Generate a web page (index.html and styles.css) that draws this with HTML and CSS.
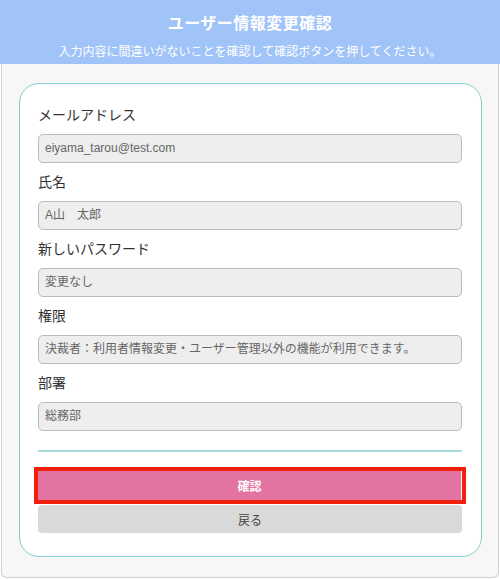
FILE: index.html
```html
<!DOCTYPE html>
<html lang="ja">
<head>
<meta charset="utf-8">
<title>ユーザー情報変更確認</title>
<link rel="stylesheet" href="styles.css">
</head>
<body>
<header class="header">
  <h1 class="title">ユーザー情報変更確認</h1>
  <p class="subtitle">入力内容に間違いがないことを確認して確認ボタンを押してください。</p>
</header>
<main class="main">
  <section class="card">
    <div class="field">
      <label class="label">メールアドレス</label>
      <div class="input latin">eiyama_tarou@test.com</div>
    </div>
    <div class="field">
      <label class="label">氏名</label>
      <div class="input">A山　太郎</div>
    </div>
    <div class="field">
      <label class="label">新しいパスワード</label>
      <div class="input">変更なし</div>
    </div>
    <div class="field">
      <label class="label">権限</label>
      <div class="input">決裁者：利用者情報変更・ユーザー管理以外の機能が利用できます。</div>
    </div>
    <div class="field">
      <label class="label">部署</label>
      <div class="input">総務部</div>
    </div>
    <hr class="divider">
    <div class="actions">
      <button class="btn btn-confirm">確認</button>
      <button class="btn btn-back">戻る</button>
    </div>
  </section>
</main>
</body>
</html>
```
FILE: styles.css
```css
* { box-sizing: border-box; }
html, body {
  margin: 0;
  padding: 0;
  background: #ffffff;
}
body {
  font-family: "Liberation Sans", "Noto Sans CJK JP", sans-serif;
  color: #333;
  width: 500px;
  height: 579px;
}
.header {
  background: #a0c3f8;
  height: 64px;
  text-align: center;
  color: #fff;
  padding-top: 13px;
}
.title {
  margin: 0;
  font-size: 16px;
  line-height: 22px;
  font-weight: bold;
  letter-spacing: 0.5px;
}
.subtitle {
  margin: 9px 0 0;
  font-size: 12px;
  line-height: 16px;
}
.main {
  margin: 0 1px;
  height: 514px;
  background: #f7f7f7;
  border: 1px solid #d0d0d0;
  border-top: none;
  border-radius: 0 0 6px 6px;
  padding: 19px 16px 0 17px;
}
.card {
  background: #fff;
  border: 1px solid #82cfcf;
  border-radius: 20px;
  padding: 12px 19px 23px 18px;
  height: 474px;
}
.field { display: flex; flex-direction: column; }
.label {
  font-size: 14px;
  line-height: 20px;
  margin: 9px 0;
  color: #333;
}
.input {
  height: 29px;
  background: #eeeeee;
  border: 1px solid #bcbcbc;
  border-radius: 5px;
  font-size: 12px;
  line-height: 27px;
  color: #666;
  padding: 0 6px;
  white-space: nowrap;
  overflow: hidden;
}
.divider {
  border: none;
  height: 2px;
  background: #a6dada;
  margin: 19px 0 0;
}
.actions {
  display: flex;
  flex-direction: column;
  gap: 5px;
  margin-top: 19px;
}
.btn {
  display: block;
  width: 100%;
  border: none;
  font-family: "Liberation Sans", "Noto Sans CJK JP", sans-serif;
  font-size: 12px;
  cursor: pointer;
  padding: 0;
}
.btn-confirm {
  height: 29px;
  background: #e374a2;
  color: #fff;
  font-weight: bold;
  border-right: 1px solid #fff;
  outline: 4px solid #f0200c;
  outline-offset: 0;
}
.btn-back {
  height: 28px;
  background: #d9d9d9;
  color: #444;
  border-radius: 4px;
}
```
